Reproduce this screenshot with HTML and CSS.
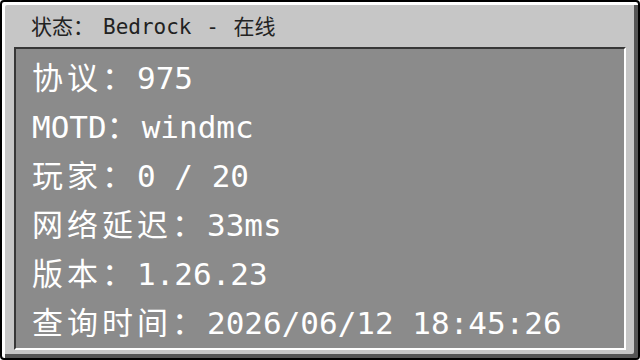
FILE: index.html
```html
<!DOCTYPE html>
<html lang="zh">
<head>
<meta charset="utf-8">
<link rel="stylesheet" href="styles.css">
</head>
<body>
<div class="panel">
  <div class="title">状态<span class="sep">：</span>Bedrock - 在线</div>
  <div class="inner">
    <div class="row"><span class="cjk">协议：</span>975</div>
    <div class="row">MOTD<span class="cjk">：</span>windmc</div>
    <div class="row"><span class="cjk">玩家：</span>0 / 20</div>
    <div class="row"><span class="cjk">网络延迟：</span>33ms</div>
    <div class="row"><span class="cjk">版本：</span>1.26.23</div>
    <div class="row"><span class="cjk">查询时间：</span>2026/06/12 18:45:26</div>
  </div>
</div>
</body>
</html>
```
FILE: styles.css
```css
html, body {
  margin: 0;
  padding: 0;
  background: #ffffff;
}
body {
  width: 640px;
  height: 360px;
  overflow: hidden;
  font-family: "DejaVu Sans Mono", "Noto Sans CJK SC", monospace;
}
.panel {
  box-sizing: border-box;
  width: 640px;
  height: 360px;
  border: 2px solid #000;
  border-radius: 4px;
  background: #c6c6c6;
  box-shadow: inset 3px 3px 0 #ffffff, inset -4px -4px 0 #555555;
  display: flex;
  flex-direction: column;
  padding: 0 12px 12px 12px;
}
.title {
  height: 45px;
  box-sizing: border-box;
  padding: 4px 0 0 17px;
  line-height: 42px;
  font-size: 21px;
  color: #222222;
  white-space: pre;
  word-spacing: 2px;
}
.sep {
  letter-spacing: 9px;
}
.inner {
  flex: 1;
  background: #8b8b8b;
  border-top: 2px solid #373737;
  border-left: 2px solid #373737;
  border-bottom: 2px solid #ffffff;
  border-right: 2px solid #ffffff;
  padding: 5px 0 0 16px;
  color: #ffffff;
  font-size: 31px;
}
.row {
  height: 49px;
  line-height: 49px;
  white-space: pre;
}
.cjk {
  letter-spacing: 4px;
}
```
